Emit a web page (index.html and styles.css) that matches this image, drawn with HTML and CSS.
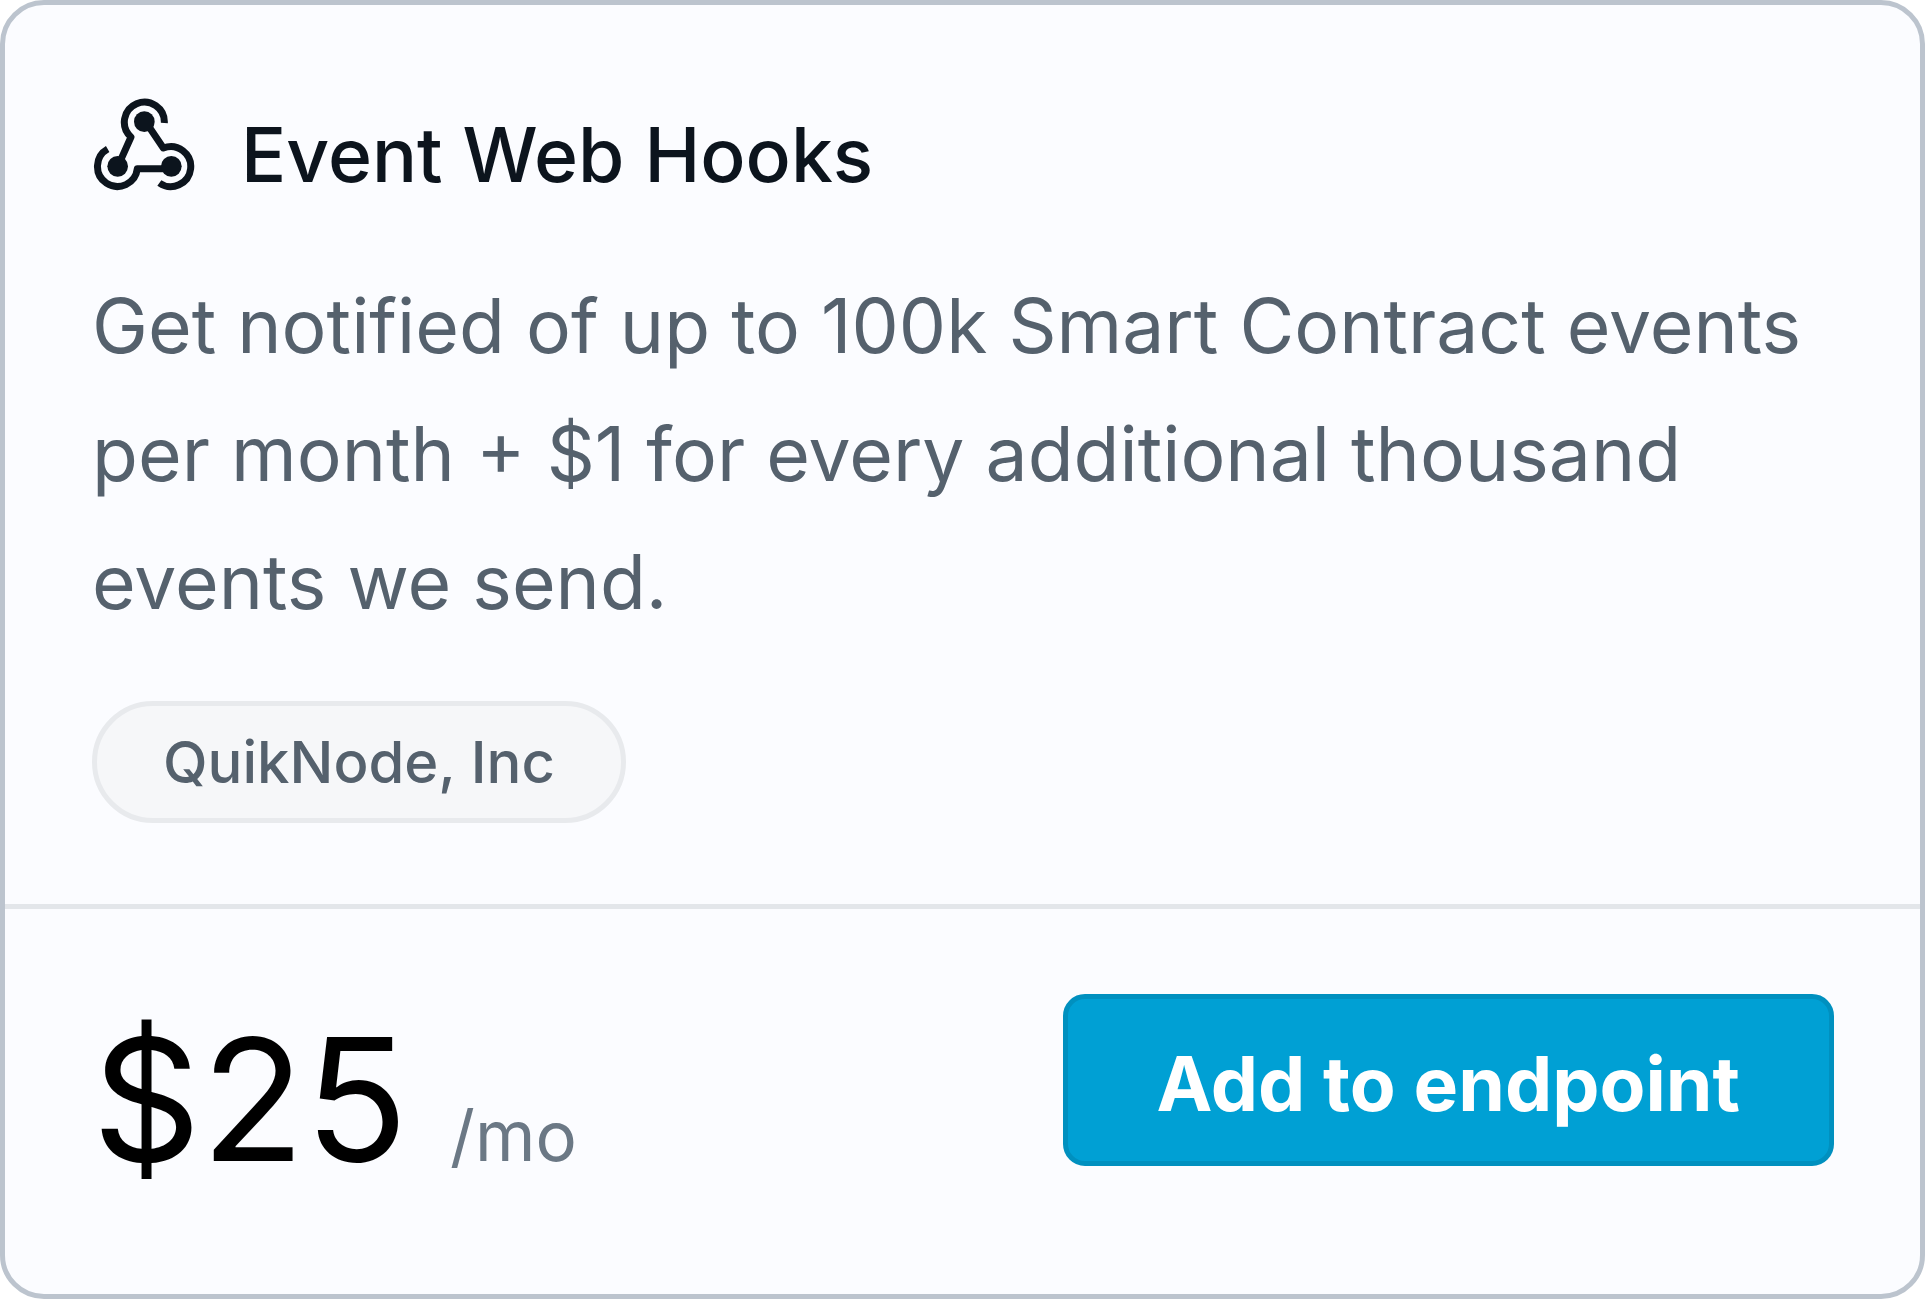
FILE: index.html
```html
<!DOCTYPE html>
<html lang="en">
<head>
    <meta charset="UTF-8">
    <meta name="viewport" content="width=device-width, initial-scale=1.0">
    <title>Event Web Hooks</title>
    <link rel="stylesheet" href="styles.css">
</head>
<body>
    <article class="card">
        <!-- Add-on details -->
        <div class="card-body">
            <div class="card-header">
                <svg class="icon" viewBox="35 36 312 282" aria-hidden="true">
                    <g fill="none" stroke="currentColor" stroke-width="21" stroke-linejoin="round">
                        <path d="M252 114A60 60 0 1 0 152 156L118 232"/>
                        <path d="M82 192A60 60 0 1 0 171 251H265"/>
                        <path d="M205 124L249 189A60 60 0 1 1 237 294"/>
                    </g>
                    <g fill="currentColor">
                        <circle cx="192" cy="110" r="31"/>
                        <circle cx="112" cy="244" r="31"/>
                        <circle cx="273" cy="244" r="31"/>
                    </g>
                </svg>
                <h1 class="title">Event Web Hooks</h1>
            </div>
            <p class="description">Get notified of up to 100k Smart Contract events per month + $1 for every additional thousand events we send.</p>
            <span class="tag">QuikNode, Inc</span>
        </div>

        <!-- Price and action -->
        <div class="card-footer">
            <p class="price">$25 <span class="period">/mo</span></p>
            <button type="button" class="button">Add to endpoint</button>
        </div>
    </article>
</body>
</html>
```

FILE: styles.css
```css
* {
    box-sizing: border-box;
}
body {
    margin: 0;
    font-family: Inter, sans-serif;
    background-color: #fff;
}
.card {
    display: flex;
    flex-direction: column;
    min-height: 100vh;
    background-color: #fbfcff;
    border: 5px solid #bcc4ce;
    border-radius: 44px;
}
.card-body {
    padding: 88px 87px 81px;
    border-bottom: 5px solid #e3e6ea;
}
.card-header {
    display: flex;
    align-items: flex-start;
    gap: 45px;
}
.icon {
    width: 104px;
    height: 94px;
    margin-top: 4px;
    color: #0c141d;
}
.title {
    margin: 0;
    padding-top: 4px;
    font-size: 75px;
    font-weight: 500;
    line-height: 116px;
    color: #0c141d;
}
.description {
    margin: 49px 0 55px;
    font-size: 75px;
    line-height: 128px;
    color: #55616d;
}
.tag {
    display: block;
    width: fit-content;
    padding: 0 66px;
    font-size: 58px;
    font-weight: 500;
    line-height: 112px;
    color: #55616d;
    background-color: #f6f7f9;
    border: 5px solid #e8eaed;
    border-radius: 61px;
}
.card-footer {
    display: flex;
    justify-content: space-between;
    align-items: flex-start;
    padding: 85px 86px 80px 87px;
}
.price {
    display: flex;
    align-items: baseline;
    gap: 42px;
    margin: 0;
    font-size: 170px;
    line-height: 210px;
    color: #000;
}
.period {
    font-size: 69px;
    line-height: 84px;
    color: #6b7885;
}
.button {
    padding: 8px 89px 0;
    font-family: inherit;
    font-size: 75px;
    font-weight: 700;
    line-height: 154px;
    color: #fff;
    background-color: #00a0d4;
    border: 5px solid #0090bf;
    border-radius: 22px;
    cursor: pointer;
}
.button:hover {
    background-color: #0090bf;
}
```
